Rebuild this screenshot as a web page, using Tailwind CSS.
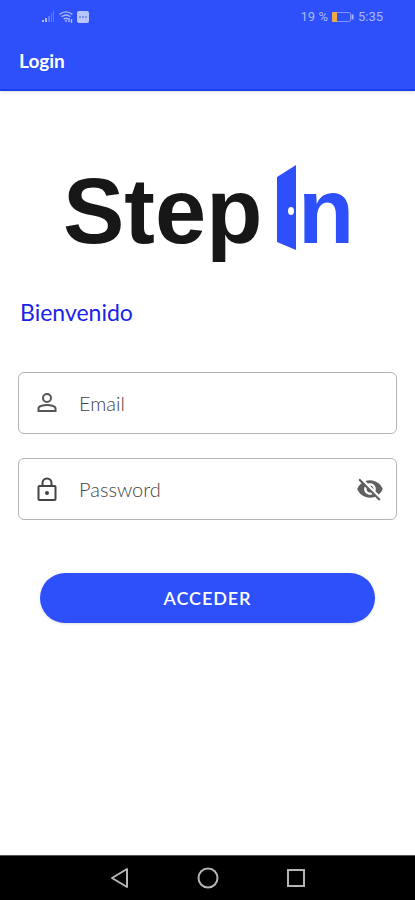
<!DOCTYPE html>
<html lang="es">
<head>
    <meta charset="UTF-8">
    <meta name="viewport" content="width=device-width, initial-scale=1.0">
    <title>Login</title>

    <!--Tailwind Library-->
    <script src="https://cdn.jsdelivr.net/npm/@tailwindcss/browser@4"></script>
</head>
<body class="min-h-screen flex flex-col bg-white font-['Lato',sans-serif]">

    <!--Header-->
    <header class="bg-[#2d50fa] text-white border-b-2 border-[#1440ee] shadow-sm">
        <!--Status Bar-->
        <div class="flex items-center justify-between h-[34px] pl-[42px] pr-8 text-[#a9b8ff] font-['Roboto',sans-serif] text-[13px]">
            <div class="flex items-center gap-1">
                <svg class="w-[13px] h-3" viewBox="0 0 13 12" fill="currentColor">
                    <path d="M0 9h2v2H0zM3 7h2v4H3z"/>
                    <path d="M6 5h2v6H6zM9 2h1v9H9zM11 0h1v11h-1z" opacity=".4"/>
                </svg>
                <svg class="w-[14px] h-3" viewBox="0 0 14 12" fill="none" stroke="currentColor" stroke-width="1.4">
                    <path d="M.6 3.4Q7-1.6 13.4 3.4M2.6 5.8q4.4-3.6 8.8 0M4.8 8.2q2.2-1.8 4.4 0"/>
                    <path d="M7 9v2M10 7v4M12.5 8v4"/>
                </svg>
                <svg class="w-3 h-3" viewBox="0 0 12 12">
                    <rect width="12" height="12" rx="2" fill="#b9c5ff"/>
                    <path d="M2 6h8" stroke="#7f92ee" stroke-width="2" stroke-dasharray="2 1"/>
                </svg>
            </div>
            <div class="flex items-center gap-1">
                <span>19 %</span>
                <svg class="w-[22px] h-[10px]" viewBox="0 0 22 10">
                    <rect x=".5" y=".5" width="18" height="9" rx="1.5" fill="none" stroke="#7f94ff"/>
                    <rect width="5" height="10" rx="1" fill="#eda84a"/>
                    <path d="M20.5 2.5v5" stroke="#a9b8ff" stroke-width="2"/>
                </svg>
                <span>5:35</span>
            </div>
        </div>
        <h1 class="h-[55px] px-[19px] flex items-center text-[19px] font-bold">Login</h1>
    </header>

    <main class="flex-1 px-[18px]">
        <!--Logo-->
        <svg class="block mx-auto mt-[59px] w-[300px] h-[130px]" viewBox="0 0 300 130" role="img" aria-label="Step In">
            <g font-family="Liberation Sans, Arial, sans-serif" font-weight="700" font-size="92">
                <text x="5" y="93" fill="#171717">Step</text>
                <text x="240" y="93" fill="#2d50fa">n</text>
            </g>
            <path d="M219 27 238 15v85l-19-8z" fill="#2d50fa"/>
            <ellipse cx="233" cy="61" rx="3" ry="4" fill="#fff"/>
        </svg>

        <h2 class="mt-4 px-0.5 text-[23px] leading-8 text-[#1a24e8]">Bienvenido</h2>

        <!--Login Form-->
        <form class="mt-11">
            <div class="flex items-center h-[62px] px-4 border border-[#b4b4b4] rounded-md">
                <label for="email" aria-label="Email">
                    <svg class="w-6 h-6" viewBox="0 0 24 24" fill="none" stroke="#555" stroke-width="2">
                        <circle cx="12" cy="7" r="4"/>
                        <path d="M3.5 20v-2.5c0-2.5 5.5-3.5 8.5-3.5s8.5 1 8.5 3.5V20z"/>
                    </svg>
                </label>
                <input id="email" type="email" placeholder="Email" class="flex-1 min-w-0 ml-5 text-xl font-light text-[#333] placeholder:text-[#444] outline-none">
            </div>
            <div class="flex items-center mt-6 h-[62px] px-4 border border-[#b4b4b4] rounded-md">
                <label for="password" aria-label="Password">
                    <svg class="w-6 h-6" viewBox="0 0 24 24" fill="none" stroke="#444" stroke-width="2">
                        <rect x="3.5" y="9" width="17" height="14" rx="1"/>
                        <path d="M7.5 9V6a4.5 4.5 0 0 1 9 0v3"/>
                        <circle cx="12" cy="16" r="2" fill="#444" stroke="none"/>
                    </svg>
                </label>
                <input id="password" type="password" placeholder="Password" class="flex-1 min-w-0 ml-5 text-xl font-light text-[#333] placeholder:text-[#444] outline-none">
                <button type="button" aria-label="Mostrar password" class="-mr-1">
                    <svg class="w-7 h-7" viewBox="0 0 24 24" fill="#5f5f5f">
                        <path d="M12 7c2.76 0 5 2.24 5 5 0 .65-.13 1.26-.36 1.83l2.92 2.92c1.51-1.26 2.7-2.89 3.43-4.75-1.73-4.39-6-7.5-11-7.5-1.4 0-2.74.25-3.98.7l2.16 2.16C10.74 7.13 11.35 7 12 7zM2 4.27l2.28 2.28.46.46C3.08 8.3 1.78 10.02 1 12c1.73 4.39 6 7.5 11 7.5 1.55 0 3.03-.3 4.38-.84l.42.42L19.73 22 21 20.73 3.27 3 2 4.27zM7.53 9.8l1.55 1.55c-.05.21-.08.43-.08.65 0 1.66 1.34 3 3 3 .22 0 .44-.03.65-.08l1.55 1.55c-.67.33-1.41.53-2.2.53-2.76 0-5-2.24-5-5 0-.79.2-1.53.53-2.2zm4.31-.78 3.15 3.15.02-.16c0-1.66-1.34-3-3-3l-.17.01z"/>
                    </svg>
                </button>
            </div>
            <div class="mt-[53px] px-[22px]">
                <button type="submit" class="w-full h-[50px] rounded-full bg-[#2d50fa] text-white text-lg font-semibold tracking-wider shadow-sm">ACCEDER</button>
            </div>
        </form>
    </main>

    <!--Navigation Bar-->
    <nav class="h-[45px] flex items-center justify-center gap-16 bg-black border-t border-[#555]">
        <button type="button" aria-label="Back">
            <svg class="w-6 h-6" viewBox="0 0 24 24" fill="none" stroke="#b5b5b5" stroke-width="2" stroke-linejoin="round"><path d="M19 3v18L4 12z"/></svg>
        </button>
        <button type="button" aria-label="Home">
            <svg class="w-6 h-6" viewBox="0 0 24 24" fill="none" stroke="#b5b5b5" stroke-width="2"><circle cx="12" cy="12" r="9.5"/></svg>
        </button>
        <button type="button" aria-label="Recent">
            <svg class="w-6 h-6" viewBox="0 0 24 24" fill="none" stroke="#b5b5b5" stroke-width="2"><path d="M4 4h16v16H4z"/></svg>
        </button>
    </nav>

</body>
</html>
